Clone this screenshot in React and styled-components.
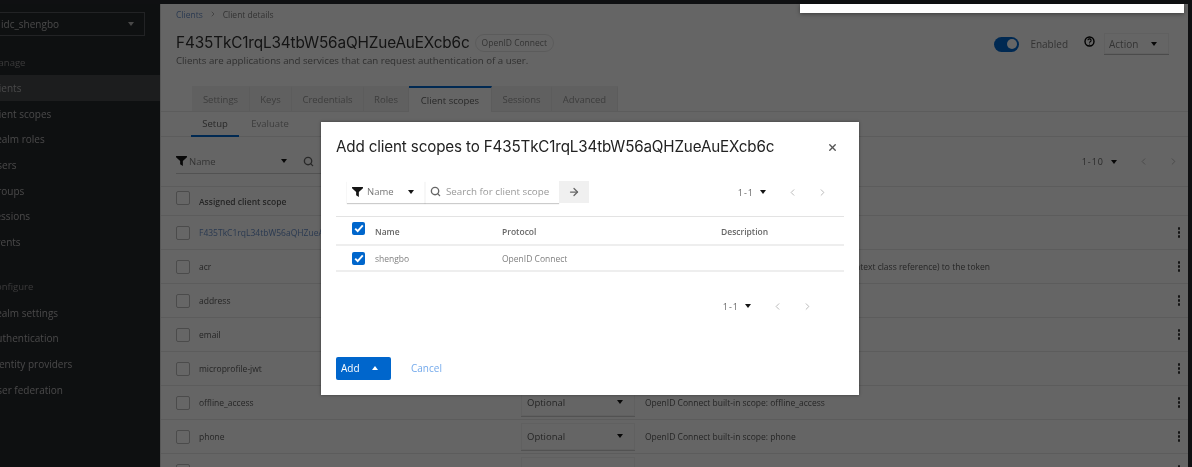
import React from "react";
import styled, { createGlobalStyle } from "styled-components";
import { ChevronLeft, ChevronRight, ArrowRight, Search, X } from "lucide-react";

const Global = createGlobalStyle`
  html, body { margin: 0; padding: 0; width: 1192px; height: 467px; overflow: hidden; background: #0f1012; }
  * { box-sizing: border-box; }
  body { font-family: "Open Sans", "Liberation Sans", sans-serif; }
`;

const Page = styled.div`
  position: relative; width: 1192px; height: 467px; overflow: hidden;
  padding: 4px 4px 0 0; display: flex; filter: blur(0.6px);
`;
const Sidebar = styled.aside`
  width: 160px; flex: none; background: #25282c; color: #b5b5b5; font-size: 10px; overflow: hidden;
  margin-top: -4px; padding-top: 12px; height: 467px;
`;
const RealmSelect = styled.div`
  width: 146px; height: 24px; margin-left: -1px; border: 1px solid #55585c; display: flex; align-items: center;
  justify-content: space-between; padding: 0 10px 0 1px; font-size: 10px;
`;
const Group = styled.div`
  height: 25.7px; margin-top: ${p => p.$top || 0}px; display: flex; align-items: center; padding-left: 2px; margin-left: -12px;
  font-size: 9.5px; color: #909090;
`;
const NavItem = styled.div`
  height: 25.7px; display: flex; align-items: center; padding-left: 2px; margin-left: -12px;
  background: ${p => p.$active ? "#46494d" : "transparent"};
`;
const Caret = styled.span`
  display: inline-block; width: 0; height: 0; border-left: 3.5px solid transparent; border-right: 3.5px solid transparent;
  ${p => p.$up ? `border-bottom: 4px solid ${p.$c || "#151515"};` : `border-top: 4px solid ${p.$c || "#151515"};`}
`;
const Main = styled.main`
  flex: 1; min-width: 0; background: #fdfdfd; color: #666; border-left: 1px solid #ddd; overflow: hidden; display: flex; flex-direction: column;
`;
const Crumbs = styled.div`
  height: 20px; flex: none; padding-left: 15px; display: flex; align-items: center; gap: 6px; font-size: 8.5px; color: #808080;
  margin-bottom: 8px;
`;
const CrumbLink = styled.span`color: #6a8fc8;`;
const Header = styled.div`
  display: flex; flex: none; justify-content: space-between; align-items: flex-start; padding: 0 19px 0 15px; height: 52px;
`;
const TitleRow = styled.div`display: flex; align-items: center; gap: 5px;`;
const Title = styled.h1`
  margin: 0; font: 400 15.35px/22px Inter, sans-serif; letter-spacing: -0.15px; color: #333;
`;
const Chip = styled.span`
  font-size: 8.5px; height: 18px; line-height: 16px; padding: 0 6px; border: 1px solid #e4e4e4; border-radius: 9px; color: #808080;
`;
const Sub = styled.p`margin: 0; font-size: 9.7px; line-height: 14px; color: #777;`;
const HeadRight = styled.div`display: flex; align-items: center; margin-top: 1px;`;
const Toggle = styled.span`
  width: 25px; height: 15px; border-radius: 8px; background: #06c; display: flex; justify-content: flex-end; align-items: center; padding-right: 2px; margin-right: 11px;
`;
const Knob = styled.span`width: 10px; height: 10px; border-radius: 50%; background: #fff;`;
const Enabled = styled.span`font-size: 10px; color: #808080; margin-right: 16px;`;
const HelpSvg = styled.svg`margin-bottom: 6px; flex: none;`;
const ActionBtn = styled.div`
  width: 65px; height: 22px; margin-left: 9px; display: flex; align-items: center; justify-content: space-between; padding: 0 12px 0 5px;
  font-size: 10px; border-bottom: 1px solid #bbb; color: #808080; box-shadow: 0 0 0 1px #f0f0f0 inset;
`;
const Tabs = styled.div`
  display: flex; height: 26px; padding-left: 31px; border-bottom: 1px solid #e5e5e5; flex: none; margin-top: 2px;
`;
const Tab = styled.div`
  width: ${p => p.$w}px; display: flex; align-items: center; justify-content: center; font-size: 9.5px;
  background: ${p => p.$active ? "#fdfdfd" : "#f0f0f0"}; color: ${p => p.$active ? "#666" : "#989898"};
  border-top: 2px solid ${p => p.$active ? "#06c" : "transparent"};
  border-right: 1px solid #e6e6e6; height: ${p => p.$active ? 26 : 25}px;
`;
const SubTabs = styled.div`
  display: flex; height: 25px; padding-left: 30px; border-bottom: 1px solid #e5e5e5; flex: none;
`;
const SubTab = styled.div`
  width: ${p => p.$w}px; display: flex; align-items: center; justify-content: center; font-size: 9.5px; height: 25px;
  color: ${p => p.$active ? "#666" : "#989898"};
  border-bottom: 2px solid ${p => p.$active ? "#06c" : "transparent"};
`;
const BgToolbar = styled.div`
  height: 50px; flex: none; display: flex; align-items: center; justify-content: space-between; padding: 0 0 0 15px; border-bottom: 1px solid #e5e5e5;
`;
const BgSearch = styled.div`display: flex; align-items: center;`;
const BgFilter = styled.div`
  width: 122px; height: 25px; border-bottom: 1px solid #ccc; display: flex; align-items: center; gap: 2px; font-size: 9.5px; color: #808080; padding-right: 11px;
`;
const BgMagnifier = styled.div`
  width: 40px; height: 25px; border-bottom: 1px solid #ccc; display: flex; align-items: center; padding-left: 5px; color: #666;
`;
const Grow = styled.span`flex: 1;`;
const Pager = styled.div`
  display: flex; align-items: center; font-size: 9px; color: ${p => p.$c || "#666"}; white-space: nowrap; letter-spacing: 1px; margin-right: ${p => p.$mr || 0}px;
`;
const PagerCaret = styled.span`margin: 0 0 0 ${p => p.$gap}px; display: flex;`;
const PagerArrow = styled.span`margin-left: ${p => p.$gap}px; display: flex; color: #b5b5b5;`;
const BgRow = styled.div`
  height: ${p => p.$h || 34}px; flex: none; display: flex; align-items: center; padding: 0 6px 0 15px; border-bottom: 1px solid #e5e5e5; font-size: 8.5px; color: #5c5c5c;
`;
const BgBox = styled.span`
  width: 14px; height: 14px; flex: none; border: 1px solid #bbb; border-radius: 2px; margin-right: 9px; background: #fff;
  margin-top: ${p => p.$mt || 0}px;
`;
const BgName = styled.span`
  width: 322px; flex: none; white-space: nowrap; overflow: hidden; font-weight: ${p => p.$bold ? 600 : 400}; color: ${p => p.$link ? "#6a8fc8" : "#5c5c5c"};
`;
const BgType = styled.span`
  width: 114px; height: 28px; flex: none; margin-right: 10px; display: flex; align-items: center; justify-content: space-between; padding: 0 12px 0 6px;
  font-size: 9.5px; border-bottom: 1px solid #ccc; box-shadow: 0 0 0 1px #f0f0f0 inset; visibility: ${p => p.$hide ? "hidden" : "visible"};
`;
const Kebab = styled.span`
  width: 2.5px; height: 2.5px; background: #333; border-radius: 50%; box-shadow: 0 -4px 0 #333, 0 4px 0 #333; margin-right: 2px;
`;
const Desc = styled.span`flex: 1; white-space: nowrap; overflow: hidden;`;
const Backdrop = styled.div`position: absolute; inset: 4px 0 0 0; background: rgba(0,0,0,.6); pointer-events: none;`;
const SideStrip = styled.div`position: absolute; top: 0; left: 0; right: 0; height: 4px; background: #0f1012;`;
const RightStrip = styled.div`position: absolute; top: 0; right: 0; bottom: 0; width: 4px; background: #0f1012;`;
const Popup = styled.div`position: absolute; left: 800px; top: 4px; width: 384px; height: 9px; background: #fff; box-shadow: 0 1px 4px rgba(0,0,0,.4);`;
const Modal = styled.section`
  position: absolute; left: 321px; top: 122px; width: 538px; height: 273px; background: #fff; padding: 15px 15px 15px;
  display: flex; flex-direction: column; box-shadow: 0 0 3px rgba(0,0,0,.4); color: #777;
`;
const ModalHead = styled.div`display: flex; justify-content: space-between; align-items: center; height: 20px; padding-right: 6px;`;
const ModalTitle = styled.h2`margin: 0; font: 400 15.2px/20px Inter, sans-serif; color: #222; letter-spacing: -0.15px;`;
const ModalBar = styled.div`
  display: flex; align-items: center; justify-content: space-between; margin-top: 24px; padding-left: 11px; height: 22px;
`;
const SearchGroup = styled.div`display: flex; height: 22px;`;
const FilterPart = styled.div`
  width: 78px; display: flex; align-items: center; gap: 4px; font-size: 9.5px; color: #777; padding: 0 0 1px 5px; box-shadow: 0 1px 1px rgba(0,0,0,.2);
`;
const SearchPart = styled.div`
  width: 134px; display: flex; align-items: center; gap: 5px; padding: 0 0 1px 5px; font-size: 9.8px; color: #999; box-shadow: 0 1px 1px rgba(0,0,0,.2);
`;
const ArrowBtn = styled.div`width: 30px; background: #f0f0f0; display: flex; align-items: center; justify-content: center; color: #666;`;
const ModalTable = styled.div`margin-top: 13px; border-top: 1px solid #e3e3e3;`;
const MRow = styled.div`
  display: grid; grid-template-columns: 39px 127px 219px 1fr; align-items: center; height: ${p => p.$h}px; border-bottom: 2px solid #eee;
  font-size: 8.5px; font-weight: ${p => p.$head ? 600 : 400}; color: ${p => p.$head ? "#666" : "#808080"}; padding-top: ${p => p.$pt || 0}px;
`;
const Check = styled.span`
  width: 13px; height: 13px; margin-left: 16px; border-radius: 2px; background: #06c; display: flex; align-items: center; justify-content: center;
  margin-top: ${p => p.$mt || 0}px;
`;
const BottomPager = styled.div`display: flex; justify-content: flex-end; margin-top: 24px; height: 20px; align-items: center;`;
const Actions = styled.div`display: flex; align-items: center; margin-top: auto;`;
const AddBtn = styled.div`
  width: 55px; height: 23px; background: #06c; border-radius: 2px; color: #fff; font-size: 10px; display: flex; align-items: center; padding: 0 0 2px 5px; gap: 12px;
`;
const Cancel = styled.span`font-size: 10px; color: #74aaec; margin: 0 0 2px 20px;`;

const nav1 = ["Clients", "Client scopes", "Realm roles", "Users", "Groups", "Sessions", "Events"];
const nav2 = ["Realm settings", "Authentication", "Identity providers", "User federation"];
const tabs = [["Settings", 58], ["Keys", 42], ["Credentials", 72], ["Roles", 45], ["Client scopes", 83, true], ["Sessions", 60], ["Advanced", 66]];
const rows = [
  ["F435TkC1rqL34tbW56aQHZueAuEXcb6c", "", true],
  ["acr", "OpenID Connect scope for add acr (authentication context class reference) to the token"],
  ["address", "OpenID Connect built-in scope: address"],
  ["email", "OpenID Connect built-in scope: email"],
  ["microprofile-jwt", "Microprofile - JWT built-in scope"],
  ["offline_access", "OpenID Connect built-in scope: offline_access"],
  ["phone", "OpenID Connect built-in scope: phone"],
  ["profile", "OpenID Connect built-in scope: profile"],
];

const FilterIcon = () => (
  <svg width="11" height="10" viewBox="0 0 12 11"><path d="M0 0h12v1.4L7.5 5.6V11L4.5 9.2V5.6L0 1.4z" fill="#151515" /></svg>
);
const Tick = () => (
  <svg width="10" height="9" viewBox="0 0 10 9"><path d="M1.2 4.6l2.5 2.6L8.8 1.4" fill="none" stroke="#fff" strokeWidth="1.9" /></svg>
);
const Help = () => (
  <HelpSvg width="11" height="11" viewBox="0 0 11 11">
    <circle cx="5.5" cy="5.5" r="4.5" fill="none" stroke="#000" strokeWidth="1.4" />
    <path d="M3.9 4.3a1.6 1.5 0 1 1 2.3 1.4c-.5.3-.7.5-.7 1" fill="none" stroke="#000" strokeWidth="1.1" />
    <circle cx="5.5" cy="8" r=".6" fill="#000" />
  </HelpSvg>
);
const PagerBlock = ({ label, gaps, mr, c }) => (
  <Pager $mr={mr} $c={c}>
    {label}
    <PagerCaret $gap={gaps[0]}><Caret /></PagerCaret>
    <PagerArrow $gap={gaps[1]}><ChevronLeft size={11} /></PagerArrow>
    <PagerArrow $gap={gaps[2]}><ChevronRight size={11} /></PagerArrow>
  </Pager>
);

export default function App() {
  return (
    <>
      <Global />
      <Page>
        <Sidebar>
          <RealmSelect><span>idc_shengbo</span><Caret $c="#b5b5b5" /></RealmSelect>
          <Group $top={13.5}>Manage</Group>
          {nav1.map((n, i) => <NavItem key={n} $active={i === 0}>{n}</NavItem>)}
          <Group $top={19}>Configure</Group>
          {nav2.map(n => <NavItem key={n}>{n}</NavItem>)}
        </Sidebar>
        <Main>
          <Crumbs><CrumbLink>Clients</CrumbLink><ChevronRight size={8} /><span>Client details</span></Crumbs>
          <Header>
            <div>
              <TitleRow><Title>F435TkC1rqL34tbW56aQHZueAuEXcb6c</Title><Chip>OpenID Connect</Chip></TitleRow>
              <Sub>Clients are applications and services that can request authentication of a user.</Sub>
            </div>
            <HeadRight>
              <Toggle><Knob /></Toggle>
              <Enabled>Enabled</Enabled>
              <Help />
              <ActionBtn>Action<Caret /></ActionBtn>
            </HeadRight>
          </Header>
          <Tabs>{tabs.map(([t, w, a]) => <Tab key={t} $w={w} $active={a}>{t}</Tab>)}</Tabs>
          <SubTabs>
            <SubTab $w={48} $active>Setup</SubTab>
            <SubTab $w={62}>Evaluate</SubTab>
          </SubTabs>
          <BgToolbar>
            <BgSearch>
              <BgFilter><FilterIcon />Name<Grow /><Caret /></BgFilter>
              <BgMagnifier><Search size={11} strokeWidth={3} /></BgMagnifier>
            </BgSearch>
            <PagerBlock label="1-10" gaps={[6.5, 21, 19]} mr={9.5} />
          </BgToolbar>
          <BgRow $h={29}>
            <BgBox $mt={-6} /><BgName $bold>Assigned client scope</BgName>
          </BgRow>
          {rows.map(([n, d, link], i) => (
            <BgRow key={n}>
              <BgBox />
              <BgName $link={link}>{n}</BgName>
              <BgType $hide={i < 5}>{i === 7 ? "Default" : "Optional"}<Caret /></BgType>
              <Desc>{d}</Desc>
              <Kebab />
            </BgRow>
          ))}
        </Main>
        <Backdrop />
        <SideStrip />
        <RightStrip />
        <Popup />
        <Modal>
          <ModalHead>
            <ModalTitle>Add client scopes to F435TkC1rqL34tbW56aQHZueAuEXcb6c</ModalTitle>
            <X size={11} strokeWidth={3} color="#555" />
          </ModalHead>
          <ModalBar>
            <SearchGroup>
              <FilterPart><FilterIcon />Name<Grow /><Caret /><Grow /></FilterPart>
              <SearchPart><Search size={11} strokeWidth={3} color="#666" />Search for client scope</SearchPart>
              <ArrowBtn><ArrowRight size={12} strokeWidth={2.5} /></ArrowBtn>
            </SearchGroup>
            <PagerBlock label="1-1" gaps={[5.5, 21, 19]} mr={16.5} />
          </ModalBar>
          <ModalTable>
            <MRow $h={29} $head $pt={2}>
              <Check $mt={-7}><Tick /></Check><span>Name</span><span>Protocol</span><span>Description</span>
            </MRow>
            <MRow $h={26}>
              <Check><Tick /></Check><span>shengbo</span><span>OpenID Connect</span><span />
            </MRow>
          </ModalTable>
          <BottomPager><PagerBlock label="1-1" gaps={[5.5, 21, 19]} mr={31.5} /></BottomPager>
          <Actions>
            <AddBtn>Add<Caret $up $c="#fff" /></AddBtn>
            <Cancel>Cancel</Cancel>
          </Actions>
        </Modal>
      </Page>
    </>
  );
}
